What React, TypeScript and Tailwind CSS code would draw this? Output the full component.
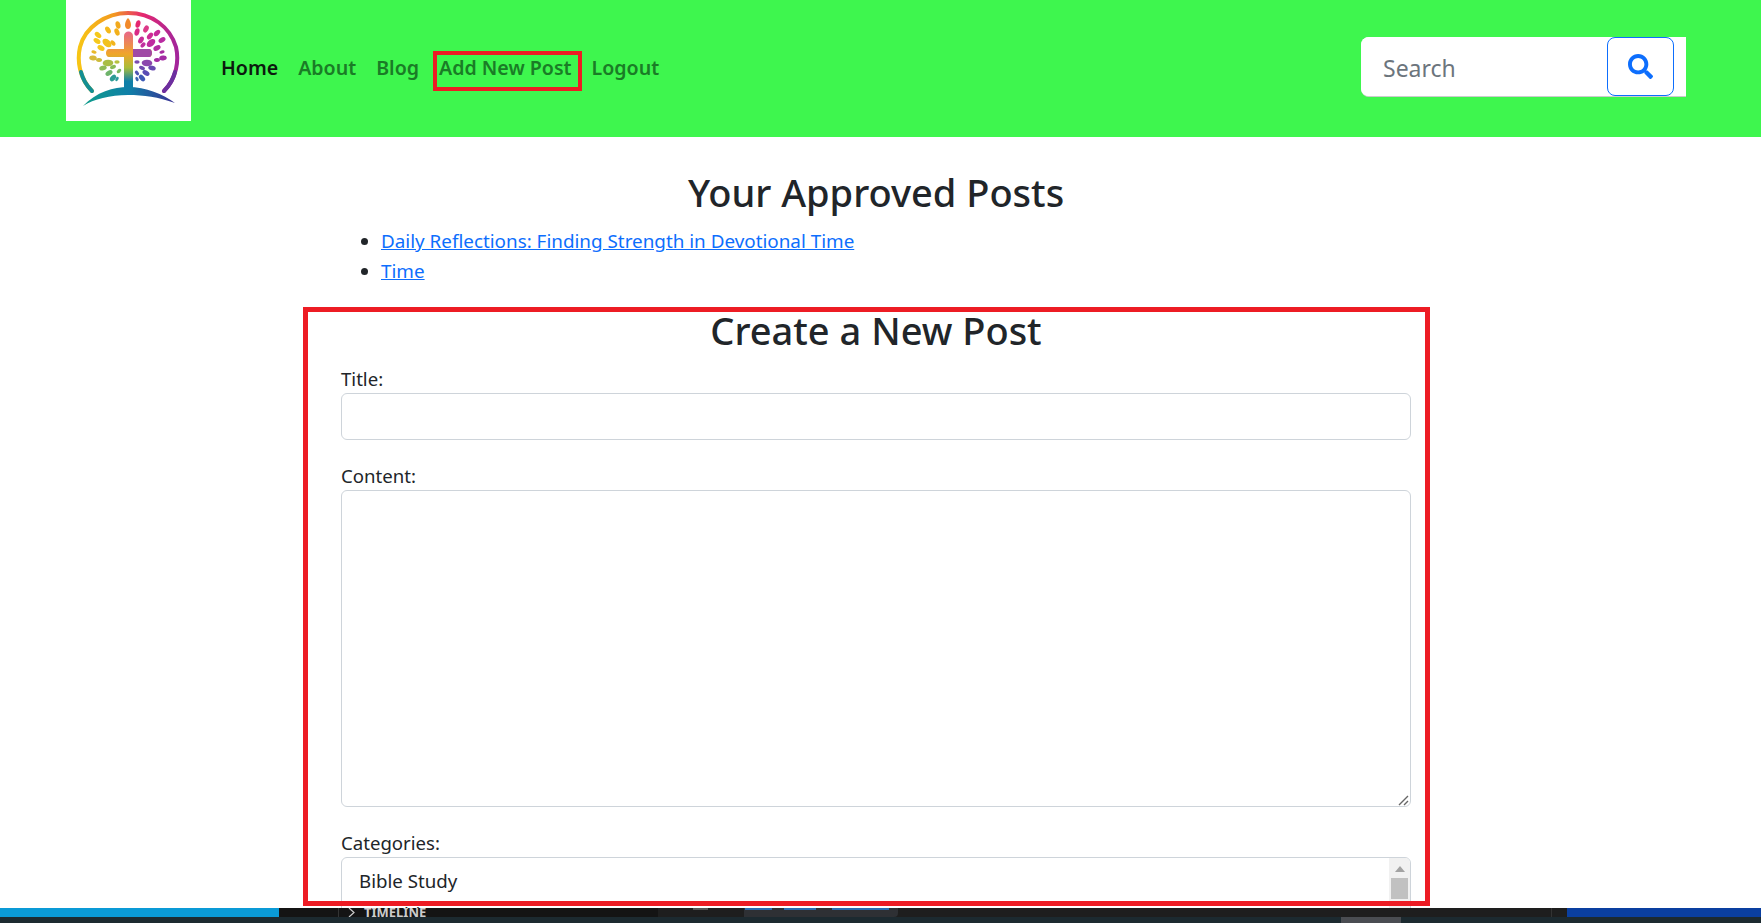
import { FaSearch } from "react-icons/fa";

const links = ["About", "Blog", "Add New Post", "Logout"];

// x, y, scale, colour of each leaf in the logo
const leaves: [number, number, number, string][] = [
  [52, 25, 1, "#f2a91c"], [42, 30, 1, "#f5b91c"], [51, 32, 1, "#f2b01c"], [32, 35, 1, "#f5c81c"],
  [41, 43, 1.4, "#f2c21c"], [31, 41, 1, "#f5c81c"], [35, 48, 1, "#f5c81c"], [47, 43, 0.8, "#f2b41c"],
  [28, 52, 0.7, "#e9b92a"], [27, 58, 1, "#d8b93a"], [33, 60, 0.8, "#cdbb3c"], [42, 63, 1.4, "#a9bd45"],
  [51, 62, 0.7, "#b7c13f"], [37, 68, 1, "#8fbb57"], [47, 67, 0.8, "#89bb57"], [43, 73, 1, "#6eb36a"],
  [53, 71, 0.7, "#7ab75e"], [47, 78, 1, "#2e9b94"], [51, 79, 0.6, "#2b9b9b"],
  [72, 24, 1, "#e5276f"], [80, 29, 1, "#dc3a88"], [71, 32, 1, "#d92a86"], [91, 33, 1, "#c72a9b"],
  [84, 36, 1, "#cf2b95"], [75, 40, 1, "#c72b98"], [96, 40, 1, "#b92ba1"], [85, 43, 1.3, "#bf2b9f"],
  [91, 48, 1, "#b22ba1"], [77, 45, 0.8, "#c12f9f"], [96, 52, 0.7, "#a92ba1"], [97, 58, 1, "#a32ba3"],
  [91, 60, 0.8, "#a32ba3"], [81, 63, 1.4, "#8c46ad"], [71, 62, 0.7, "#7a4cb0"], [86, 68, 1, "#6849b0"],
  [76, 68, 0.8, "#6f4ab0"], [80, 73, 1, "#5a4cb4"], [71, 73, 0.7, "#4f55b4"], [76, 78, 1, "#3d5ab5"],
  [71, 79, 0.6, "#3a65b0"],
];

function Logo() {
  return (
    <svg viewBox="0 0 125 121" className="h-[121px] w-[125px]">
      <defs>
        <linearGradient id="ring" x1="0" y1="0" x2="1" y2="0">
          <stop offset="0" stopColor="#f7c515" />
          <stop offset="0.35" stopColor="#f39a1f" />
          <stop offset="0.65" stopColor="#e5276f" />
          <stop offset="1" stopColor="#a3259b" />
        </linearGradient>
        <linearGradient id="ground" x1="0" y1="0" x2="1" y2="0">
          <stop offset="0" stopColor="#0f9d8a" />
          <stop offset="0.5" stopColor="#0f7fa8" />
          <stop offset="1" stopColor="#3b2f93" />
        </linearGradient>
        <linearGradient id="cross" x1="0" y1="0" x2="0" y2="1">
          <stop offset="0" stopColor="#e8668a" />
          <stop offset="0.38" stopColor="#f0a52a" />
          <stop offset="0.62" stopColor="#a9bd3a" />
          <stop offset="0.85" stopColor="#0f7fa8" />
        </linearGradient>
      </defs>
      <path d="M26 91 C13 78 11 60 14 47 C19 27 40 13 62 13 C86 13 104 27 110 47 C113 60 111 78 98 91" fill="none" stroke="url(#ring)" strokeWidth="4" strokeLinecap="round" />
      <path d="M15 72 C17 80 21 86 26 91" fill="none" stroke="#138f94" strokeWidth="4" strokeLinecap="round" />
      <path d="M109 72 C107 80 103 86 98 91" fill="none" stroke="#6b2f9f" strokeWidth="4" strokeLinecap="round" />
      <path d="M17 106 C30 92 48 87 62 87 C80 87 97 94 109 103 C92 97 78 95 62 95 C44 95 28 99 17 106 Z" fill="url(#ground)" />
      <path d="M58 36 C58 30 67 30 67 36 V49 H83 C87 49 87 57 83 57 H67 V90 H58 V57 H43 C39 57 39 49 43 49 H58 Z" fill="url(#cross)" />
      <path d="M67 49 H83 C87 49 87 57 83 57 H67 Z" fill="#a04aa5" />
      <path d="M62 18 C66 22 66 29 62 29 C58 29 58 22 62 18 Z" fill="#f28a2a" />
      {leaves.map(([x, y, s, c]) => {
        const angle = (Math.atan2(y - 62, x - 62) * 180) / Math.PI + 90;
        return (
          <ellipse key={`${x}-${y}`} cx={x} cy={y} rx={2.4 * s} ry={3.8 * s} fill={c} transform={`rotate(${angle} ${x} ${y})`} />
        );
      })}
    </svg>
  );
}

export default function App() {
  return (
    <div className="relative h-[923px] overflow-hidden bg-white font-['Noto_Sans','Open_Sans',sans-serif] text-[#212529]">
      <header className="flex h-[137px] items-start bg-[#3ef64e] pl-[66px] pr-[75px]">
        <div className="h-[121px] w-[125px] bg-white">
          <Logo />
        </div>
        <nav className="ml-[22px] mt-[52px] flex items-center text-[19.6px] font-semibold leading-[32px]">
          <a className="px-2 text-[#0c1a0e]">Home</a>
          {links.map((l) => (
            <a key={l} className="ml-1 px-2 text-[#1a7c26]">
              {l}
            </a>
          ))}
        </nav>
        <form className="ml-auto mt-[37px] flex h-[60px] w-[325px] rounded-l-lg border-b border-[#ccc] bg-white pr-3">
          <input
            placeholder="Search"
            className="min-w-0 flex-1 rounded-l-lg bg-white px-[22px] pt-[3px] text-[23px] outline-none placeholder:text-[#6c757d]"
          />
          <button className="flex w-[67px] items-center justify-center rounded-lg border border-[#0d6efd] text-[25px] text-[#0d6efd]">
            <FaSearch />
          </button>
        </form>
      </header>

      <main className="ml-[311px] w-[1130px] pt-[31px]">
        <h1 className="text-center text-[38px] font-medium leading-[48px]">Your Approved Posts</h1>
        <ul className="ml-[30px] mt-[10px] list-disc pl-[40px] text-[18.85px] leading-[30px]">
          <li>
            <a className="text-[#0d6efd] underline">Daily Reflections: Finding Strength in Devotional Time</a>
          </li>
          <li>
            <a className="text-[#0d6efd] underline">Time</a>
          </li>
        </ul>
        <section className="mt-[20px] px-[30px]">
          <h2 className="text-center text-[38px] font-medium leading-[48px]">Create a New Post</h2>
          <label className="mt-[10px] block text-[18.6px] leading-[29px]">Title:</label>
          <input className="block h-[47px] w-full rounded-md border border-[#ced4da]" />
          <label className="mt-[21px] block text-[18.6px] leading-[29px]">Content:</label>
          <div className="relative">
            <textarea className="block h-[317px] w-full resize-none rounded-md border border-[#ced4da]" />
            <svg viewBox="0 0 11 11" className="absolute bottom-[1px] right-[2px] h-[11px] w-[11px] text-[#666]">
              <path d="M1 10 L10 1 M6 10 L10 6" stroke="currentColor" strokeWidth="1.4" fill="none" />
            </svg>
          </div>
          <label className="mt-[21px] block text-[18.6px] leading-[29px]">Categories:</label>
          <div className="relative flex h-[120px] overflow-hidden rounded-md border border-[#ced4da] text-[18.7px]">
            <div className="flex-1 px-[17px] pt-[8px] leading-[30px]">
              <div>Bible Study</div>
              <div className="mt-[3px]">Worship</div>
            </div>
            <div className="w-[21px] bg-[#f1f1f1] px-[2px]">
              <div className="mx-auto mt-[8px] h-0 w-0 border-x-[5px] border-b-[6px] border-x-transparent border-b-[#a3a3a3]" />
              <div className="mt-[6px] h-[21px] bg-[#c1c1c1]" />
            </div>
          </div>
        </section>
      </main>

      {/* red annotation boxes */}
      <div className="pointer-events-none absolute left-[433px] top-[51px] h-[40px] w-[149px] border-[4px] border-[#ed1c24]" />
      <div className="pointer-events-none absolute left-[303px] top-[307px] h-[599px] w-[1127px] border-[5px] border-[#ed1c24]" />

      {/* editor window peeking in at the bottom */}
      <div className="absolute inset-x-0 top-[908px] h-[15px] bg-[#1c2a30]">
        <div className="flex h-[9px] overflow-hidden bg-[#1e1e1e]">
          <div className="w-[279px] bg-[#0a9ad6]" />
          <div className="flex w-[379px] bg-[#141414]">
            <div className="ml-[59px] w-[1px] bg-[#333]" />
            <svg viewBox="0 0 8 9" className="ml-[9px] h-[9px] w-[8px] text-[#cccccc]">
              <path d="M1 0 L6 4.5 L1 9" stroke="currentColor" strokeWidth="1.2" fill="none" />
            </svg>
            <span className="ml-[8px] -mt-[3px] text-[13px] font-bold leading-[14px] text-[#cccccc]">TIMELINE</span>
          </div>
          <div className="ml-[35px] mt-0 flex h-[2px] w-[15px] bg-[#555]" />
          <div className="ml-[36px] h-[9px] w-[154px] rounded-br bg-[#2e3034]">
            <div className="flex gap-[12px] pl-[1px]">
              <div className="h-[2px] w-[27px] bg-[#2a6cb0]" />
              <div className="h-[2px] w-[32px] bg-[#2a6cb0]" />
              <div className="ml-[4px] h-[2px] w-[57px] bg-[#2a6cb0]" />
            </div>
          </div>
          <div className="ml-[653px] w-[1px] bg-[#333]" />
          <div className="ml-auto w-[194px] bg-[#0a3fa0]" />
        </div>
        <div className="ml-[1341px] h-[6px] w-[60px] bg-[#4a4d52]" />
      </div>
    </div>
  );
}
